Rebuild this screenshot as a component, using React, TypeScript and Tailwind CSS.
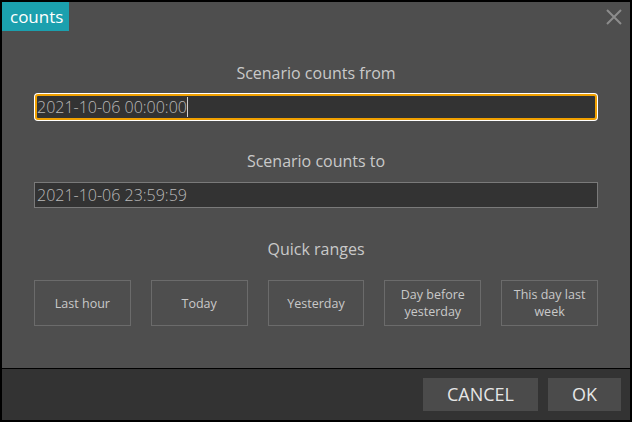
const ranges = ["Last hour", "Today", "Yesterday", "Day before yesterday", "This day last week"];

export default function App() {
  return (
    <div
      className="w-[632px] h-[422px] border-2 border-black bg-[#4e4e4e] flex flex-col text-[#c9c9c9]"
      style={{ fontFamily: '"Open Sans", "Noto Sans", sans-serif' }}
    >
      {/* header */}
      <div className="h-[29px] flex items-start justify-between">
        <div className="h-[29px] w-[67px] bg-[#1ba0ae] text-white text-[17px] leading-[29px] pl-[8px]">
          counts
        </div>
        <svg width="16" height="16" viewBox="0 0 16 16" className="mt-[7px] mr-[8px]">
          <path d="M1 1 L15 15 M15 1 L1 15" stroke="#8c8c8c" strokeWidth="2" />
        </svg>
      </div>

      {/* body */}
      <div className="flex-1 flex flex-col px-[32px]">
        <div className="mt-[32px] h-[20px] text-[16px] leading-[20px] text-center">Scenario counts from</div>
        <div className="mt-[11px] mx-[1px] h-[26px] rounded-[3px] border-2 border-[#f0a000] ring-1 ring-white bg-[#333333] flex items-center text-[16px] font-light text-[#bababa]">
          <span>2021-10-06 00:00:00</span>
          <span className="w-px h-[20px] bg-[#d0d0d0]" />
        </div>

        <div className="mt-[31px] h-[20px] text-[16px] leading-[20px] text-center">Scenario counts to</div>
        <div className="mt-[11px] h-[26px] border border-[#7a7a7a] bg-[#333333] flex items-center pl-[2px] text-[16px] font-light text-[#bababa]">
          2021-10-06 23:59:59
        </div>

        <div className="mt-[31px] h-[20px] text-[16px] leading-[20px] text-center">Quick ranges</div>
        <div className="mt-[21px] flex gap-[20px]">
          {ranges.map((r) => (
            <div
              key={r}
              className="w-[97px] h-[46px] border border-[#6b6b6b] flex items-center justify-center text-center text-[12.5px] leading-[17px] px-[8px]"
            >
              {r}
            </div>
          ))}
        </div>
      </div>

      {/* footer */}
      <div className="h-[52px] border-t border-black bg-[#333333] flex items-center justify-end gap-[10px] pr-[9px]">
        <button className="w-[115px] h-[33px] bg-[#4b4b4b] text-[#e6e6e6] text-[18px]">CANCEL</button>
        <button className="w-[73px] h-[33px] bg-[#4b4b4b] text-[#e6e6e6] text-[18px]">OK</button>
      </div>
    </div>
  );
}
